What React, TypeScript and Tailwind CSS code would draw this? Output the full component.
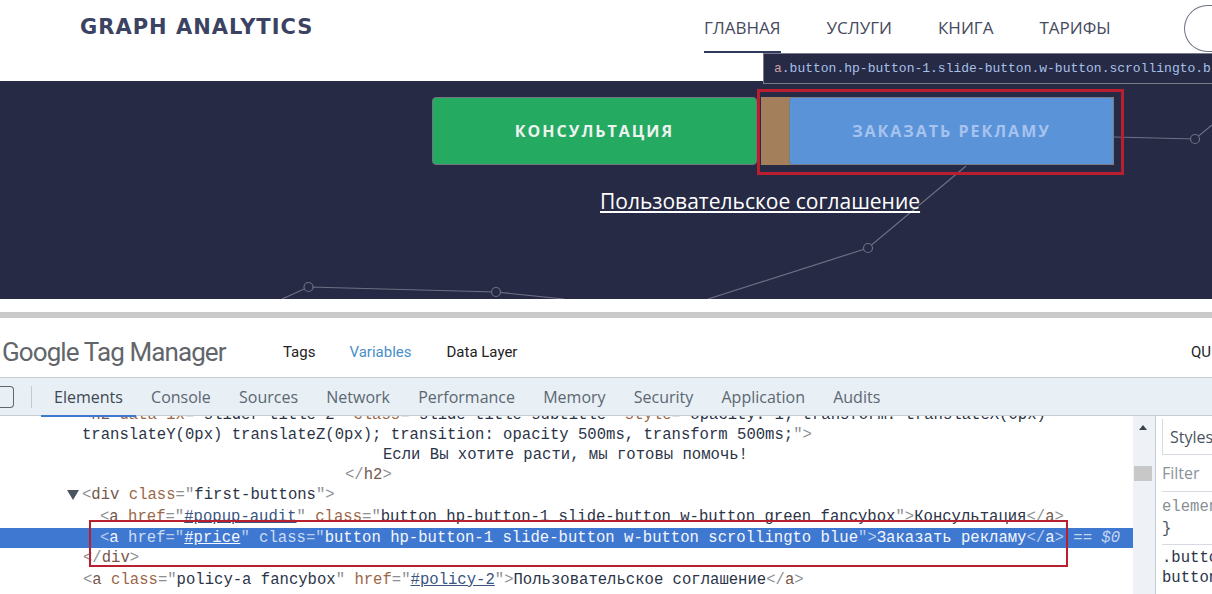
import type { ReactNode } from 'react';

// ─── Helpers ───

const navItems = [
  { label: 'ГЛАВНАЯ', active: true },
  { label: 'УСЛУГИ', active: false },
  { label: 'КНИГА', active: false },
  { label: 'ТАРИФЫ', active: false },
];

const tabs = ['Elements', 'Console', 'Sources', 'Network', 'Performance', 'Memory', 'Security', 'Application', 'Audits'];

const Br = ({ children }: { children: ReactNode }) => <span className="text-[#8c8f94]">{children}</span>;
const Tag = ({ children }: { children: ReactNode }) => <span className="text-[#75574c]">{children}</span>;
const Attr = ({ children }: { children: ReactNode }) => <span className="text-[#9c6748]">{children}</span>;
const Val = ({ children }: { children: ReactNode }) => <span className="text-[#2b3448]">{children}</span>;
const Link = ({ children }: { children: ReactNode }) => <span className="text-[#3a5580] underline">{children}</span>;

function GraphLines() {
  const nodes = [[308.5, 206], [496, 211], [868, 167], [1195, 58]];
  return (
    <svg className="absolute inset-0" width="1212" height="218" fill="none" stroke="#6d7083" strokeWidth="1.2">
      <path d="M282 218 L308.5 206 L496 211 L564 218" />
      <path d="M708 218 L868 167 L966 85" />
      <path d="M1114 56 L1195 58 L1212 44" />
      {nodes.map(([cx, cy]) => (
        <circle key={cx} cx={cx} cy={cy} r="4.5" fill="#262a44" />
      ))}
    </svg>
  );
}

// ─── Page sections ───

function SiteHeader() {
  return (
    <header className="flex h-[81px] bg-white">
      <div className="w-[704px] shrink-0 pl-[80px] pt-[12px] font-['DejaVu_Sans',sans-serif] text-[21px] font-bold tracking-[1px] text-[#3b4262]">
        GRAPH ANALYTICS
      </div>
      <nav className="flex h-[53px] shrink-0 gap-[46px] font-['Open_Sans',sans-serif] text-[17px] text-[#454a5e]">
        {navItems.map((item) => (
          <a key={item.label} className={item.active ? 'border-b-2 border-[#2f3a5e] pt-[15px]' : 'pt-[15px]'}>
            {item.label}
          </a>
        ))}
      </nav>
      <div className="ml-[73px] mt-[5px] h-[47px] w-[60px] shrink-0 rounded-l-full border border-r-0 border-[#6d7285]" />
    </header>
  );
}

function Hero() {
  return (
    <section className="relative h-[218px] bg-[#262a44]">
      <GraphLines />
      <div className="relative flex pl-[432px] pt-[16px] font-['Open_Sans',sans-serif] text-[16px] font-bold tracking-[2px]">
        <div className="flex h-[68px] w-[325px] items-center justify-center rounded-[4px] border border-[#70757f] bg-[#25aa62] text-[#eef3f0]">
          КОНСУЛЬТАЦИЯ
        </div>
        <div className="ml-[4px] flex h-[68px] w-[353px] bg-[#a47f5b] pl-[28px]">
          <div className="flex flex-1 items-center justify-center rounded-[3px] border border-[#787c88] bg-[#5b93d9] text-[#a6c3ef]">
            ЗАКАЗАТЬ РЕКЛАМУ
          </div>
        </div>
      </div>
      <div className="relative mt-[21px] pl-[600px] font-['Open_Sans',sans-serif] text-[21px] leading-[30px] text-white">
        <a className="underline underline-offset-2">Пользовательское соглашение</a>
      </div>
    </section>
  );
}

function GtmBar() {
  return (
    <div className="flex h-[59px] items-center bg-white pt-[10px] font-['Roboto',sans-serif] text-[15px] text-[#222]">
      <div className="w-[283px] shrink-0 pl-[2px] text-[26px] tracking-[-0.9px] text-[#62666b]">Google Tag Manager</div>
      <span>Tags</span>
      <span className="ml-[34px] text-[#4a8fc9]">Variables</span>
      <span className="ml-[35px]">Data Layer</span>
      <span className="ml-auto w-[21px] overflow-hidden">QU</span>
    </div>
  );
}

function DevtoolsTabs() {
  return (
    <div className="relative flex h-[39px] items-center border-y border-[#c6ced4] bg-[#e8eff5] font-['Open_Sans',sans-serif] text-[16px] text-[#5c6771]">
      <div className="h-[22px] w-[14px] shrink-0 rounded-r-sm border border-l-0 border-[#5c6771]" />
      <div className="ml-[17px] h-[22px] w-px shrink-0 bg-[#c3cad0]" />
      <div className="ml-[22px] flex gap-[28.2px]">
        {tabs.map((tab) => (
          <span key={tab} className={tab === 'Elements' ? 'text-[#3e4852]' : ''}>
            {tab}
          </span>
        ))}
      </div>
      <div className="absolute bottom-[-2px] left-[41px] h-[2px] w-[95px] bg-[#3f78d0]" />
    </div>
  );
}

function CodePanel() {
  return (
    <div className="h-[179px] w-[1133px] shrink-0 overflow-hidden bg-white font-['Liberation_Mono',monospace] text-[15.6px] text-[#2b3448] whitespace-pre">
      <div className="-mt-[11px] h-[20px] pl-[82px] leading-[20px]">
        <Br>&lt;</Br><Tag>h2</Tag> <Attr>data-ix</Attr><Br>="</Br><Val>slider-title-2</Val><Br>"</Br> <Attr>class</Attr><Br>="</Br><Val>slide-title subtitle</Val><Br>"</Br> <Attr>style</Attr><Br>="</Br><Val>opacity: 1; transform: translateX(0px)</Val>
      </div>
      <div className="h-[20px] pl-[82px] leading-[20px]">
        translateY(0px) translateZ(0px); transition: opacity 500ms, transform 500ms;<Br>"&gt;</Br>
      </div>
      <div className="h-[20px] pl-[383px] leading-[20px]">Если Вы хотите расти, мы готовы помочь!</div>
      <div className="h-[20px] pl-[345px] leading-[20px]">
        <Br>&lt;/</Br><Tag>h2</Tag><Br>&gt;</Br>
      </div>
      <div className="relative h-[21px] pl-[82px] leading-[21px]">
        <span className="absolute left-[67px] top-[5px] h-0 w-0 border-x-[6px] border-t-[10px] border-x-transparent border-t-[#4a5560]" />
        <Br>&lt;</Br><Tag>div</Tag> <Attr>class</Attr><Br>="</Br><Val>first-buttons</Val><Br>"&gt;</Br>
      </div>
      <div className="h-[22px] pl-[100px] leading-[22px]">
        <Br>&lt;</Br><Tag>a</Tag> <Attr>href</Attr><Br>="</Br><Link>#popup-audit</Link><Br>"</Br> <Attr>class</Attr><Br>="</Br><Val>button hp-button-1 slide-button w-button green fancybox</Val><Br>"&gt;</Br>Консультация<Br>&lt;/</Br><Tag>a</Tag><Br>&gt;</Br>
      </div>
      <div className="h-[20px] bg-[#3f78d0] pl-[100px] leading-[20px] text-[#f4f7fc]">
        <span className="text-[#bcd0ee]">&lt;</span>a <span className="text-[#cddcf4]">href</span><span className="text-[#bcd0ee]">="</span><span className="underline">#price</span><span className="text-[#bcd0ee]">"</span> <span className="text-[#cddcf4]">class</span><span className="text-[#bcd0ee]">="</span>button hp-button-1 slide-button w-button scrollingto blue<span className="text-[#bcd0ee]">"&gt;</span>Заказать рекламу<span className="text-[#bcd0ee]">&lt;/</span>a<span className="text-[#bcd0ee]">&gt;</span><span className="italic text-[#c4d5ef]"> == $0</span>
      </div>
      <div className="h-[21px] pl-[83px] leading-[21px]">
        <Br>&lt;/</Br><Tag>div</Tag><Br>&gt;</Br>
      </div>
      <div className="h-[22px] pl-[83px] leading-[22px]">
        <Br>&lt;</Br><Tag>a</Tag> <Attr>class</Attr><Br>="</Br><Val>policy-a fancybox</Val><Br>"</Br> <Attr>href</Attr><Br>="</Br><Link>#policy-2</Link><Br>"&gt;</Br>Пользовательское соглашение<Br>&lt;/</Br><Tag>a</Tag><Br>&gt;</Br>
      </div>
    </div>
  );
}

function ScrollTrack() {
  return (
    <div className="flex h-[179px] w-[20px] shrink-0 flex-col items-center bg-[#eef2f6]">
      <div className="mt-[9px] h-0 w-0 border-x-[4px] border-b-[5px] border-x-transparent border-b-[#39424c]" />
      <div className="mt-[36px] h-[15px] w-[18px] bg-[#c8c8c8]" />
    </div>
  );
}

function StylesPanel() {
  return (
    <div className="ml-[2px] h-[179px] flex-1 overflow-hidden border-l border-[#c6ced4] bg-white pl-[6px] font-['Open_Sans',sans-serif] text-[16px] text-[#4a545e] whitespace-nowrap">
      <div className="mt-[3px] flex h-[36px] items-center border-b border-l border-[#d5dbe0] pl-[7px]">Styles</div>
      <div className="flex h-[37px] items-center border-b border-[#d5dbe0] text-[#8a929a]">Filter</div>
      <div className="h-[53px] border-b border-[#d5dbe0] pt-[4px] font-['Liberation_Mono',monospace] text-[15.6px] leading-[22px]">
        <div className="text-[#8a8f96]">elemen</div>
        <div>{'}'}</div>
      </div>
      <div className="pt-[3px] font-['Liberation_Mono',monospace] text-[15.6px] leading-[20px] text-[#2b3448]">
        <div>.butto</div>
        <div>button</div>
      </div>
    </div>
  );
}

export default function App() {
  return (
    <div className="relative h-[594px] w-[1212px] overflow-hidden bg-white">
      <SiteHeader />
      <Hero />
      <div className="mt-[13px] h-[6px] bg-[#c9c9c9]" />
      <GtmBar />
      <DevtoolsTabs />
      <div className="flex bg-[#eef2f6]">
        <CodePanel />
        <ScrollTrack />
        <StylesPanel />
      </div>

      {/* devtools overlays */}
      <div className="absolute left-[763px] top-[53px] flex h-[31px] w-[449px] items-center overflow-hidden border-y border-l border-[#777b8c] bg-[#262a44] pl-[10px] font-['Liberation_Mono',monospace] text-[13px] text-[#a8c0e8] whitespace-pre">
        <span className="text-[#cf9ea6]">a</span>
        <span>.button.hp-button-1.slide-button.w-button.scrollingto.b</span>
      </div>
      <div className="absolute left-[757px] top-[89px] h-[86px] w-[367px] border-[3px] border-[#b9202f]" />
      <div className="absolute left-[89px] top-[520px] h-[47px] w-[979px] border-2 border-[#b9202f]" />
    </div>
  );
}
